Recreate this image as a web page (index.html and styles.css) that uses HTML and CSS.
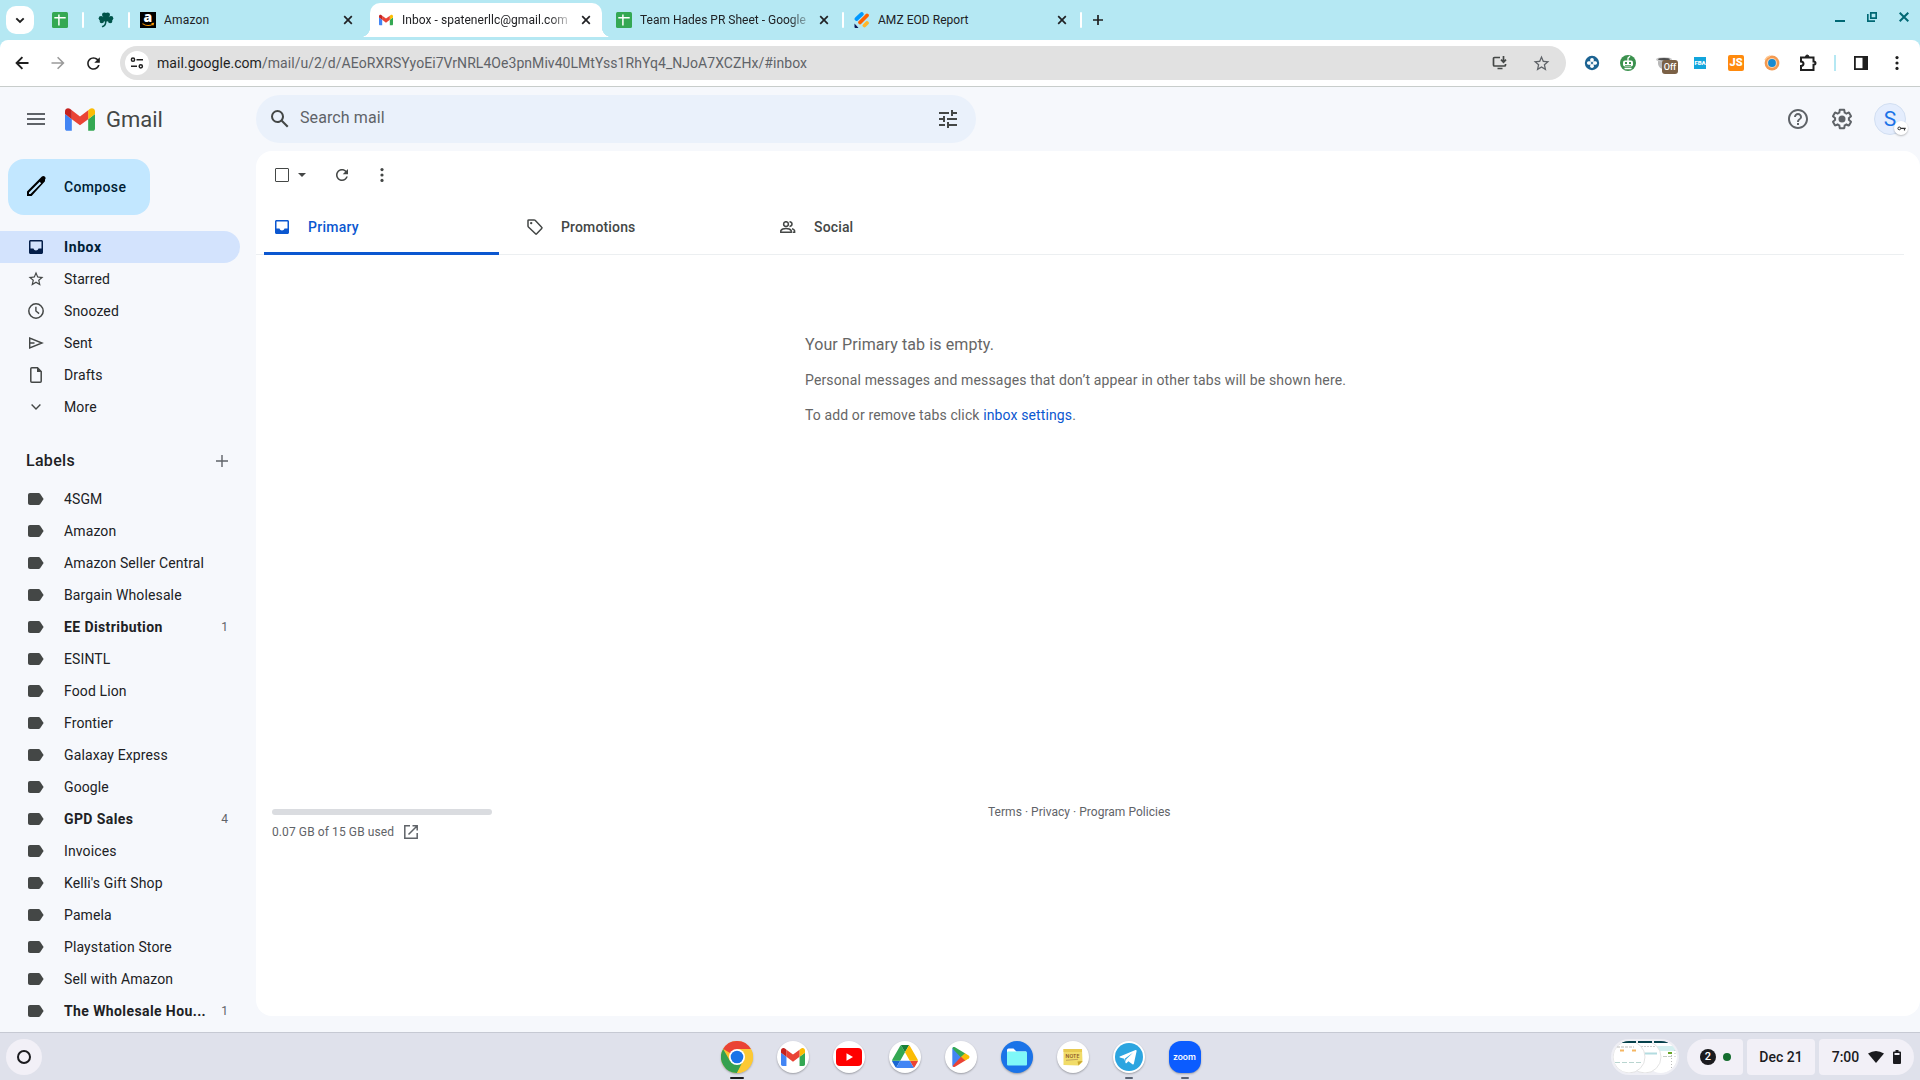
FILE: index.html
```html
<!DOCTYPE html>
<html lang="en">
<head>
    <meta charset="UTF-8">
    <title>Inbox - spatenerllc@gmail.com</title>
    <link rel="stylesheet" href="styles.css">
</head>
<body>
    <svg class="defs" width="0" height="0">
        <symbol id="close" viewBox="0 0 10 10"><path d="M1.2 1.2l7.6 7.6M8.8 1.2L1.2 8.8" stroke="currentColor" stroke-width="1.7" fill="none"/></symbol>
        <symbol id="sheets" viewBox="0 0 16 16"><rect width="16" height="16" rx="1.5" fill="#34a853"/><path d="M6.9 2.5v11M2.3 5.7h11.4" stroke="#fff" stroke-width="1.5"/></symbol>
        <symbol id="gmail" viewBox="52 42 88 66">
            <path fill="#4285f4" d="M58 108h14V74L52 59v43c0 3.32 2.69 6 6 6"/>
            <path fill="#34a853" d="M120 108h14c3.32 0 6-2.69 6-6V59l-20 15"/>
            <path fill="#fbbc04" d="M120 48v26l20-15v-8c0-7.42-8.47-11.65-14.4-7.2"/>
            <path fill="#ea4335" d="M72 74V48l24 18 24-18v26L96 92"/>
            <path fill="#c5221f" d="M52 51v8l20 15V48l-5.600-4.200C60.460 39.350 52 43.580 52 51"/>
        </symbol>
        <symbol id="label" viewBox="0 0 16 12"><path d="M2 0h8.600c.6 0 1.100.3 1.500.8L15.600 6l-3.500 5.200c-.4.500-.9.800-1.500.8H2c-1.100 0-2-.9-2-2V2C0 .9.900 0 2 0z" fill="#444746"/></symbol>
        <symbol id="inbox" viewBox="0 0 14 14"><path fill="currentColor" fill-rule="evenodd" d="M1.500 0h11c.8 0 1.500.7 1.500 1.500v11c0 .8-.7 1.500-1.500 1.500h-11C.7 14 0 13.300 0 12.500v-11C0 .7.700 0 1.500 0zm0 1.500v7h3C4.800 9.700 5.800 10.500 7 10.500s2.200-.8 2.500-2h3v-7z"/></symbol>
        <symbol id="star" viewBox="0 0 24 24"><path fill="currentColor" d="M22 9.240l-7.190-.62L12 2 9.190 8.630 2 9.240l5.460 4.730L5.820 21 12 17.270 18.180 21l-1.630-7.030L22 9.240zM12 15.400l-3.760 2.270 1-4.280-3.320-2.880 4.380-.38L12 6.100l1.710 4.040 4.380.38-3.320 2.880 1 4.280L12 15.400z"/></symbol>
        <symbol id="reload" viewBox="0 0 24 24"><path fill="currentColor" d="M17.650 6.350C16.200 4.900 14.210 4 12 4c-4.420 0-7.990 3.580-7.990 8s3.570 8 7.990 8c3.730 0 6.840-2.550 7.730-6h-2.080c-.82 2.330-3.040 4-5.650 4-3.310 0-6-2.690-6-6s2.690-6 6-6c1.660 0 3.140.69 4.220 1.780L13 11h7V4l-2.350 2.350z"/></symbol>
        <symbol id="dots" viewBox="0 0 4 16"><circle cx="2" cy="2.600" r="1.600" fill="currentColor"/><circle cx="2" cy="8" r="1.600" fill="currentColor"/><circle cx="2" cy="13.400" r="1.600" fill="currentColor"/></symbol>
    </svg>

    <header class="tab-strip">
        <div class="tab-search"><svg width="10" height="7" viewBox="0 0 10 7"><path d="M1.300 1.300L5 5l3.700-3.700" stroke="#1f1f1f" stroke-width="1.900" fill="none"/></svg></div>
        <svg class="pinned" width="16" height="16"><use href="#sheets"/></svg>
        <i class="sep"></i>
        <svg class="pinned" width="16" height="16" viewBox="0 0 16 16"><g fill="#00544a"><circle cx="6.400" cy="2.800" r="2.400"/><circle cx="9.600" cy="2.800" r="2.400"/><circle cx="3" cy="6.300" r="2.300"/><circle cx="3.800" cy="9" r="2.200"/><circle cx="13" cy="6.300" r="2.300"/><circle cx="12.200" cy="9" r="2.200"/><path d="M5.500 4h5l2 5-4 .5c0 3-1 5-4 6l-.8-1.500C6 13.500 7 12 7 9.500L3.500 9z"/></g></svg>
        <i class="sep"></i>
        <div class="tab tab-amazon">
            <svg class="amazon-icon" width="16" height="16" viewBox="0 0 16 16"><rect width="16" height="16"/><text x="8" y="10.400" text-anchor="middle" fill="#fff" font-family="Open Sans, sans-serif" font-weight="800" font-size="14">a</text><path d="M2.500 11.600q5 3.600 10.500.6M11.500 11.500l2-.1-.5 2" stroke="#f90" stroke-width="1.100" fill="none"/></svg>
            <span class="tab-title">Amazon</span><svg class="close" width="10" height="10"><use href="#close"/></svg>
        </div>
        <div class="tab tab-active">
            <svg width="14" height="12"><use href="#gmail"/></svg>
            <span class="tab-title">Inbox - spatenerllc@gmail.com</span><svg class="close" width="10" height="10"><use href="#close"/></svg>
        </div>
        <div class="tab tab-sheet">
            <svg width="16" height="16"><use href="#sheets"/></svg>
            <span class="tab-title">Team Hades PR Sheet - Google</span><svg class="close" width="10" height="10"><use href="#close"/></svg>
        </div>
        <i class="sep"></i>
        <div class="tab tab-report">
            <svg width="16" height="16" viewBox="0 0 16 16"><g stroke-width="3.800" stroke-linecap="round"><path d="M2.500 7L7.800 2" stroke="#0099ff"/><path d="M6 10.500L13 3.500" stroke="#ff6100"/><path d="M10.500 13.500L13 11" stroke="#ffb629"/></g><path d="M.5 11.500L4.500 16H1.500q-1 0-1-1z" fill="#0a1551"/></svg>
            <span class="tab-title">AMZ EOD Report</span><svg class="close" width="10" height="10"><use href="#close"/></svg>
        </div>
        <i class="sep"></i>
        <svg class="new-tab" width="12" height="12" viewBox="0 0 12 12"><path d="M6 1v10M1 6h10" stroke="#1f1f1f" stroke-width="1.700"/></svg>
        <div class="window-buttons">
            <svg width="10" height="10" viewBox="0 0 10 10"><path d="M0 9h10" stroke="#006874" stroke-width="2"/></svg>
            <svg width="10" height="10" viewBox="0 0 10 10"><path d="M3.800.8h5.400v5.400H3.800zM.8 2v7.200H8" stroke="#006874" stroke-width="1.700" fill="none"/></svg>
            <svg width="10" height="10" viewBox="0 0 10 10"><path d="M.7.700l8.600 8.600M9.300.700L.7 9.300" stroke="#006874" stroke-width="2"/></svg>
        </div>
    </header>

    <nav class="browser-bar">
        <svg class="nav-icon" width="14" height="14" viewBox="0 0 14 14"><path d="M13.500 7H2M7.400 1.200L1.600 7l5.800 5.800" stroke="#1f1f1f" stroke-width="1.900" fill="none"/></svg>
        <svg class="nav-icon" width="14" height="14" viewBox="0 0 14 14"><path d="M.5 7H12M6.600 1.200L12.400 7l-5.800 5.800" stroke="#9a9a9a" stroke-width="1.600" fill="none"/></svg>
        <svg class="nav-icon reload" width="19" height="19"><use href="#reload"/></svg>
        <div class="omnibox">
            <div class="site-info"><svg width="14" height="12" viewBox="0 0 14 12"><g fill="none" stroke="#1f1f1f" stroke-width="1.500"><circle cx="3" cy="2.700" r="1.600"/><path d="M6.500 2.700H13M1 9.300h6"/><circle cx="10.800" cy="9.300" r="1.600"/></g></svg></div>
            <span class="url">mail.google.com<span>/mail/u/2/d/AEoRXRSYyoEi7VrNRL4Oe3pnMiv40LMtYss1RhYq4_NJoA7XCZHx/#inbox</span></span>
            <svg class="install" width="16" height="14" viewBox="0 0 16 14"><path d="M8 1.500H2.500q-1 0-1 1v6.500q0 1 1 1h10q1 0 1-1V8M5.500 12.500h5M11.500 0v6M9 3.700l2.500 2.500L14 3.700" fill="none" stroke="#444746" stroke-width="1.700"/></svg>
            <svg class="bookmark" width="19" height="19"><use href="#star"/></svg>
        </div>
        <div class="extensions">
            <svg width="16" height="16" viewBox="0 0 16 16"><circle cx="8" cy="8" r="7.200" fill="#1c6392"/><g fill="#fff"><circle cx="8" cy="4.700" r="1.800"/><circle cx="8" cy="11.300" r="1.800"/><circle cx="4.700" cy="8" r="1.800"/><circle cx="11.300" cy="8" r="1.800"/><path d="M6.500 4.700h3v6.600h-3z"/><path d="M4.700 6.500h6.600v3H4.700z"/></g><path d="M6.800 8h2.400M8 6.800v2.400" stroke="#1c6392" stroke-width="1.200"/></svg>
            <svg width="16" height="16" viewBox="0 0 16 16"><circle cx="8" cy="8" r="8" fill="#3b914e"/><rect x="3" y="5.500" width="10" height="6" rx="2" fill="#fff"/><path d="M8 6V3l2-1.800M4.500 13.500h7" stroke="#fff" stroke-width="1.300" fill="none"/><path d="M5 7h2v2H5zM9 7h2v2H9zM5 10h6v.700H5z" fill="#3b914e"/></svg>
            <div class="ext-off"><svg width="16" height="12" viewBox="0 0 16 12"><path d="M2 2h12v5q-1 5-6 5T2 7z" fill="#b9b9b9"/><ellipse cx="8" cy="2.500" rx="8" ry="2.300" fill="#c9c9c9"/><ellipse cx="8" cy="2.200" rx="6" ry="1.200" fill="#4c4c4c"/></svg><b>Off</b></div>
            <div class="ext-fba">FBA</div>
            <div class="ext-js">JS</div>
            <svg width="16" height="16" viewBox="0 0 16 16"><circle cx="8" cy="8" r="7.400" fill="#f49a50"/><circle cx="8" cy="8" r="5" fill="#fbd2ad"/><circle cx="8" cy="8" r="3.900" fill="#168bd2"/><path d="M1 5a8 8 0 0 1 5-4" stroke="#ffc58c" stroke-width="1.500" fill="none"/></svg>
            <svg class="puzzle" width="18" height="18" viewBox="0 0 18 18"><path d="M2 3.500h12.500v4q2 0 2 1.600t-2 1.700V16H2v-4q2.500-.2 2.500-2.200T2 7.500z" fill="none" stroke="#1f1f1f" stroke-width="2"/><path d="M6.500 3q0-2 1.700-2T10 3" fill="#1f1f1f" stroke="#1f1f1f"/></svg>
            <i></i>
            <svg width="14" height="14" viewBox="0 0 14 14"><rect x=".9" y=".9" width="12.200" height="12.200" fill="none" stroke="#1f1f1f" stroke-width="1.800"/><path d="M8.500 1h5v12h-5z" fill="#1f1f1f"/></svg>
            <svg class="menu" width="4" height="16"><use href="#dots"/></svg>
        </div>
    </nav>

    <div class="gmail">
        <header class="gmail-bar">
            <svg class="hamburger" width="18" height="12" viewBox="0 0 18 12"><path d="M0 1h18M0 6h18M0 11h18" stroke="#5f6368" stroke-width="2"/></svg>
            <svg width="30" height="23"><use href="#gmail"/></svg>
            <span class="brand">Gmail</span>
            <div class="search">
                <svg width="24" height="24" viewBox="0 0 24 24"><path fill="#444746" d="M20.490 19l-5.730-5.730C15.530 12.200 16 10.910 16 9.500A6.500 6.500 0 1 0 9.500 16c1.410 0 2.700-.47 3.770-1.240L19 20.490 20.490 19zM5 9.500C5 7.010 7.010 5 9.500 5S14 7.010 14 9.500 11.990 14 9.500 14 5 11.990 5 9.500z"/></svg>
                <span>Search mail</span>
                <svg width="24" height="24" viewBox="0 0 24 24"><path fill="#444746" d="M3 17v2h6v-2H3zM3 5v2h10V5H3zm10 16v-2h8v-2h-8v-2h-2v6h2zM7 9v2H3v2h4v2h2V9H7zm14 4v-2H11v2h10zm-6-4h2V7h4V5h-4V3h-2v6z"/></svg>
            </div>
            <div class="account">
                <svg width="24" height="24" viewBox="0 0 24 24"><path fill="#5f6368" d="M11 18h2v-2h-2v2zm1-16C6.480 2 2 6.480 2 12s4.480 10 10 10 10-4.480 10-10S17.520 2 12 2zm0 18c-4.410 0-8-3.590-8-8s3.590-8 8-8 8 3.590 8 8-3.590 8-8 8zm0-14c-2.210 0-4 1.790-4 4h2c0-1.100.9-2 2-2s2 .9 2 2c0 2-3 1.750-3 5h2c0-2.250 3-2.500 3-5 0-2.210-1.790-4-4-4z"/></svg>
                <svg width="24" height="24" viewBox="0 0 24 24"><path fill="#5f6368" d="M13.850 22.250h-3.700c-.74 0-1.360-.54-1.450-1.270l-.27-1.890c-.27-.14-.53-.29-.79-.46l-1.800.72c-.7.26-1.470-.03-1.810-.65L2.200 15.530c-.35-.66-.2-1.440.36-1.880l1.530-1.190c-.01-.15-.02-.3-.02-.46 0-.15.010-.31.020-.46l-1.520-1.190c-.59-.45-.74-1.260-.37-1.880l1.850-3.190c.34-.62 1.110-.9 1.790-.63l1.810.73c.26-.17.52-.32.780-.46l.27-1.910c.09-.7.71-1.250 1.440-1.250h3.700c.74 0 1.360.54 1.450 1.270l.27 1.890c.27.14.53.29.79.46l1.800-.72c.71-.26 1.480.03 1.820.65l1.840 3.180c.36.66.2 1.440-.36 1.880l-1.520 1.190c.01.15.020.3.020.46s-.01.31-.02.46l1.520 1.190c.56.45.72 1.230.37 1.860l-1.860 3.220c-.34.62-1.110.9-1.800.63l-1.800-.72c-.26.17-.52.32-.78.46l-.27 1.910c-.1.680-.72 1.220-1.460 1.220zm-3.230-2h2.760l.37-2.550.53-.22c.44-.18.88-.44 1.340-.78l.45-.34 2.380.96 1.380-2.400-2.030-1.580.07-.56c.03-.26.060-.51.060-.78s-.03-.53-.06-.78l-.07-.56 2.030-1.580-1.390-2.400-2.390.96-.45-.35c-.42-.32-.87-.58-1.330-.77l-.52-.22-.37-2.550h-2.760l-.37 2.550-.53.210c-.44.190-.88.440-1.340.790l-.45.330-2.380-.95-1.390 2.390 2.030 1.580-.07.56a7 7 0 0 0 0 1.560l.07.560-2.030 1.580 1.380 2.400 2.390-.96.450.35c.43.330.86.580 1.330.77l.53.220.38 2.550z"/><circle cx="12" cy="12" r="3.500" fill="#5f6368"/></svg>
                <div class="avatar">S<i><svg width="9" height="5" viewBox="0 0 9 5"><circle cx="2.300" cy="2.400" r="1.400" fill="none" stroke="#333"/><path d="M3.700 2.400h5M7.500 2.400v2" stroke="#333" stroke-width="1.200"/></svg></i></div>
            </div>
        </header>

        <div class="content">
            <aside class="sidebar">
                <button class="compose"><svg width="24" height="24" viewBox="0 0 24 24"><path fill="#000" d="M21 4.600c.8-.8.8-2 0-2.800l-.3-.3c-.8-.8-2-.8-2.800 0L3 16.400V21h4.600L21 6.200zM5 19v-1.500L15.700 6.800l1.500 1.500L6.500 19z"/></svg>Compose</button>
                <ul class="folders">
                    <li class="selected"><svg width="14" height="14"><use href="#inbox"/></svg>Inbox</li>
                    <li><svg width="18" height="18"><use href="#star"/></svg>Starred</li>
                    <li><svg width="16" height="16" viewBox="0 0 16 16"><circle cx="8" cy="8" r="7.200" fill="none" stroke="#444746" stroke-width="1.500"/><path d="M7.900 3.800V8l3.200 2.600" fill="none" stroke="#444746" stroke-width="1.400"/></svg>Snoozed</li>
                    <li><svg width="16" height="12" viewBox="0 0 16 12"><path d="M1.700 1.100v9.800L14 6zM1.700 6h4.800" fill="none" stroke="#444746" stroke-width="1.400"/></svg>Sent</li>
                    <li><svg width="12" height="16" viewBox="0 0 12 16"><path d="M7.500.8H1.800q-1 0-1 1v12.400q0 1 1 1h8.400q1 0 1-1V4.500z" fill="none" stroke="#444746" stroke-width="1.500"/><path d="M7 .5V5h4.500z" fill="#444746"/></svg>Drafts</li>
                    <li><svg width="10" height="6" viewBox="0 0 10 6"><path d="M.6.600L5 5 9.400.600" fill="none" stroke="#444746" stroke-width="1.400"/></svg>More</li>
                </ul>
                <div class="labels-title">Labels<svg width="12" height="12" viewBox="0 0 12 12"><path d="M6 0v12M0 6h12" stroke="#5f6368" stroke-width="1.400"/></svg></div>
                <ul class="labels">
                    <li><svg width="16" height="12"><use href="#label"/></svg><span>4SGM</span></li>
                    <li><svg width="16" height="12"><use href="#label"/></svg><span>Amazon</span></li>
                    <li><svg width="16" height="12"><use href="#label"/></svg><span>Amazon Seller Central</span></li>
                    <li><svg width="16" height="12"><use href="#label"/></svg><span>Bargain Wholesale</span></li>
                    <li class="unread"><svg width="16" height="12"><use href="#label"/></svg><span>EE Distribution</span><em>1</em></li>
                    <li><svg width="16" height="12"><use href="#label"/></svg><span>ESINTL</span></li>
                    <li><svg width="16" height="12"><use href="#label"/></svg><span>Food Lion</span></li>
                    <li><svg width="16" height="12"><use href="#label"/></svg><span>Frontier</span></li>
                    <li><svg width="16" height="12"><use href="#label"/></svg><span>Galaxay Express</span></li>
                    <li><svg width="16" height="12"><use href="#label"/></svg><span>Google</span></li>
                    <li class="unread"><svg width="16" height="12"><use href="#label"/></svg><span>GPD Sales</span><em>4</em></li>
                    <li><svg width="16" height="12"><use href="#label"/></svg><span>Invoices</span></li>
                    <li><svg width="16" height="12"><use href="#label"/></svg><span>Kelli's Gift Shop</span></li>
                    <li><svg width="16" height="12"><use href="#label"/></svg><span>Pamela</span></li>
                    <li><svg width="16" height="12"><use href="#label"/></svg><span>Playstation Store</span></li>
                    <li><svg width="16" height="12"><use href="#label"/></svg><span>Sell with Amazon</span></li>
                    <li class="unread"><svg width="16" height="12"><use href="#label"/></svg><span>The Wholesale Hou...</span><em>1</em></li>
                </ul>
            </aside>

            <main class="mail">
                <div class="mail-tools">
                    <i class="checkbox"></i>
                    <svg class="caret" width="8" height="4" viewBox="0 0 8 4"><path d="M0 0h8L4 4z" fill="#444746"/></svg>
                    <svg class="refresh" width="18" height="18"><use href="#reload"/></svg>
                    <svg width="4" height="16"><use href="#dots"/></svg>
                </div>
                <div class="mail-tabs">
                    <div class="active"><svg width="14" height="14"><use href="#inbox"/></svg>Primary</div>
                    <div><svg width="16" height="16" viewBox="0 0 16 16"><path d="M1 1.800q0-.9.900-.9h5.300q.5 0 .9.400l6.600 6.900q.6.600 0 1.200l-5 5.400q-.6.600-1.200 0L1.400 8q-.4-.4-.4-.9z" fill="none" stroke="#444746" stroke-width="1.500"/><circle cx="4.200" cy="4.100" r="1.200" fill="#444746"/></svg>Promotions</div>
                    <div><svg width="16" height="12" viewBox="0 0 16 12"><g fill="none" stroke="#444746" stroke-width="1.500"><circle cx="6" cy="3.100" r="2.400"/><path d="M.8 11.200V9.700Q2.200 7.600 6 7.600t5.200 2.100v1.500z"/><path d="M9.500.8q2.500.2 2.500 2.300T9.500 5.400M12 7.800q2.200.6 2.600 1.900v1.600h-2"/></g></svg>Social</div>
                </div>
                <div class="empty">
                    <h2>Your Primary tab is empty.</h2>
                    <p>Personal messages and messages that don’t appear in other tabs will be shown here.</p>
                    <p class="hint">To add or remove tabs click <a>inbox settings</a>.</p>
                </div>
                <footer>
                    <div class="storage">
                        <div class="storage-bar"></div>
                        <span>0.07 GB of 15 GB used</span><svg width="14" height="14" viewBox="0 0 14 14"><path d="M6 .8H.8v12.400h12.400V8M8.500.8h4.700v4.700M13 1L4.500 9.500" fill="none" stroke="#5f6368" stroke-width="1.500"/></svg>
                    </div>
                    <div class="terms">Terms · Privacy · Program Policies</div>
                </footer>
            </main>
        </div>
    </div>

    <div class="shelf">
        <div class="launcher"><i></i></div>
        <div class="apps">
            <div class="app running"><svg width="32" height="32" viewBox="0 0 32 32"><circle cx="16" cy="16" r="16" fill="#fbc02d"/><path d="M16 16L2.140 8A16 16 0 0 1 29.860 8z" fill="#ea4335"/><path d="M16 16l6.100 3.500L16 32A16 16 0 0 1 2.140 8l6.900 12z" fill="#34a04f"/><path d="M16 8h13.860A16 16 0 0 1 16 32l6.900-12z" fill="#fcc934"/><circle cx="16" cy="16" r="8" fill="#fff"/><circle cx="16" cy="16" r="6.300" fill="#1a73e8"/></svg></div>
            <div class="app white"><svg width="24" height="18"><use href="#gmail"/></svg></div>
            <div class="app white"><svg width="26" height="18" viewBox="0 0 26 18"><rect width="26" height="18" rx="4" fill="#f00"/><path d="M10.500 5.200v7.600L17 9z" fill="#fff"/></svg></div>
            <div class="app white"><svg width="26" height="23" viewBox="0 0 87.300 78"><path d="M6.600 66.850l3.850 6.650c.8 1.400 1.950 2.500 3.300 3.300l13.750-23.800H0c0 1.550.4 3.100 1.200 4.500z" fill="#1967d2"/><path d="M43.650 25L29.900 1.200c-1.350.8-2.500 1.900-3.300 3.300L1.200 48.500A9 9 0 0 0 0 53h27.500z" fill="#34a853"/><path d="M73.550 76.800c1.350-.8 2.500-1.900 3.300-3.300l9.250-16A9 9 0 0 0 87.300 53H59.800z" fill="#ea4335"/><path d="M43.650 25L57.400 1.200C56.050.4 54.500 0 52.900 0H34.400c-1.600 0-3.150.45-4.500 1.200z" fill="#188038"/><path d="M59.800 53H27.500L13.750 76.800c1.350.8 2.900 1.200 4.500 1.200h50.800c1.600 0 3.150-.45 4.500-1.200z" fill="#4285f4"/><path d="M73.400 26.500L60.700 4.500c-.8-1.400-1.950-2.500-3.300-3.300L43.650 25 59.800 53h27.450a9 9 0 0 0-1.200-4.500z" fill="#fbbc04"/></svg></div>
            <div class="app white"><svg width="18" height="20" viewBox="0 0 18 20"><path d="M1.500 0L9.500 10l-8 10Q.3 19.700.3 18V2Q.3.300 1.500 0z" fill="#4285f4"/><path d="M1.500 0q.7-.2 1.500.3L13.300 6.500 9 10.500.5 1.500Q.8.300 1.500 0z" fill="#34a853"/><path d="M13 6.300l3.700 2.300q1.600 1.400 0 2.800L13 13.700 8.900 10z" fill="#fbbc04"/><path d="M9 9.800l4.300 3.800L3 19.700q-1.500.8-2.500-.8z" fill="#ea4335"/></svg></div>
            <div class="app files"><svg width="22" height="18" viewBox="0 0 22 18"><path d="M1 2Q1 .5 2.500.5h5l3 3H20V12H1z" fill="#fff"/><rect x="1" y="3.500" width="20" height="14" rx="1" fill="#7ff8f8"/></svg></div>
            <div class="app white"><svg width="20" height="18" viewBox="0 0 20 18"><path d="M.5 1h18.500l.5 13-4 3.500L.5 17z" fill="#f1dc69"/><path d="M.5 1H19v3H.5z" fill="#e8ca50"/><path d="M19.500 13l-5 .5 1 4z" fill="#c9a52f"/><text x="9.500" y="10" text-anchor="middle" font-family="Inter, sans-serif" font-size="5" font-weight="600" fill="#8b5728">NOTE</text><path d="M3 12.300l12-1" stroke="#a85" stroke-width=".7"/></svg></div>
            <div class="app white idle"><svg width="28" height="28" viewBox="0 0 28 28"><circle cx="14" cy="14" r="14" fill="#2ca5e0"/><path d="M4.800 13.400L20.500 7q1.300-.3 1.100 1.200l-2.700 12.400q-.3 1.300-1.500.6l-4-3-2 2q-.6.500-.9-.5l-1.200-4-4.400-1.300q-1-.4-.1-1zM10 15.500l.8 3.600.4-2.800 6.700-6.500z" fill="#fff"/></svg></div>
            <div class="app zoom idle">zoom</div>
        </div>
        <div class="tray">
            <svg class="previews" width="68" height="36" viewBox="0 0 68 36">
                <clipPath id="pill"><rect x="2" y="2" width="64" height="32" rx="16"/></clipPath>
                <rect width="68" height="36" rx="18" fill="#efeff5"/>
                <g clip-path="url(#pill)">
                    <circle cx="50" cy="18" r="16" fill="#fff"/><path d="M43 2h14v2H43z" fill="#06414b"/><path d="M46 7h18v5H46z" fill="#d5f0f0"/><path d="M57 13h4v2h-4z" fill="#69a527"/><path d="M52 17.500h10" stroke="#c3ccc3" stroke-dasharray="4 1"/><path d="M60.500 16v16M64 8v10" stroke="#bbb" stroke-dasharray="1 2"/>
                    <circle cx="34" cy="18" r="16" fill="#fff" stroke="#e3e3e3"/><path d="M27 2h14v2H27z" fill="#06414b"/><path d="M30 7.500h14" stroke="#ccc" stroke-dasharray="2 1"/><path d="M33 14.500h13" stroke="#b3dce0" stroke-width="2"/>
                    <circle cx="18" cy="18" r="16" fill="#fff" stroke="#e3e3e3"/><path d="M11 2h14v2H11z" fill="#06414b"/><path d="M6 8h17" stroke="#bbb" stroke-dasharray="3 1"/><path d="M9 11.500h4M21 11.500h4" stroke="#f5b662" stroke-width="2"/><path d="M4 23.500h27" stroke="#b9d5d0" stroke-dasharray="5 2"/>
                </g>
            </svg>
            <div class="pill notices"><b>2</b><i></i></div>
            <div class="pill date">Dec 21</div>
            <div class="pill clock">7:00<svg width="16" height="12" viewBox="0 0 16 12"><path d="M0 2.600Q8-2.600 16 2.600L8 12z" fill="#1b1b1f"/></svg><svg width="8" height="14" viewBox="0 0 8 14"><path d="M2.500 0h3v1.500H7q1 0 1 1V13q0 1-1 1H1q-1 0-1-1V2.500q0-1 1-1h1.500z" fill="#1b1b1f"/><path d="M1.500 3h5v2h-5z" fill="#f2f0f7"/></svg></div>
        </div>
    </div>
</body>
</html>
```

FILE: styles.css
```css
* {
    box-sizing: border-box;
}
body {
    margin: 0;
    width: 1920px;
    height: 1080px;
    overflow: hidden;
    display: flex;
    flex-direction: column;
    font-family: Roboto, "Liberation Sans", sans-serif;
    font-size: 14px;
    color: #202124;
    background: #b5e8f3;
}
svg {
    flex: none;
    display: block;
}
.defs {
    position: absolute;
}
ul {
    list-style: none;
    margin: 0;
    padding: 0;
}

/* tab strip */
.tab-strip {
    height: 40px;
    flex: none;
    display: flex;
    align-items: center;
    padding: 0 11px 8px 6px;
    background: #b5e8f3;
}
.tab-strip > * {
    margin-top: 8px;
}
.tab-search {
    width: 28px;
    height: 28px;
    border-radius: 10px;
    background: #fff;
    display: flex;
    align-items: center;
    justify-content: center;
    margin-right: 18px;
}
.sep {
    width: 2px;
    height: 16px;
    background: #fff;
    border-radius: 1px;
}
.pinned {
    margin-right: 14px;
}
.sep + .pinned {
    margin-left: 14px;
}
.amazon-icon {
    overflow: visible;
}
.tab {
    display: flex;
    align-items: center;
    height: 34px;
    font-size: 12px;
    letter-spacing: 0.04px;
}
.tab-title {
    flex: 1;
    margin-left: 8px;
    margin-right: 13px;
    white-space: nowrap;
    overflow: hidden;
}
.tab-amazon {
    width: 240px;
    padding: 0 17px 0 10px;
    letter-spacing: 0.2px;
}
.tab-active {
    width: 232px;
    background: #fff;
    border-radius: 10px 10px 0 0;
    padding: 0 11px 0 9px;
    position: relative;
}
.tab-active .tab-title {
    margin-left: 9px;
    margin-right: 12px;
}
/* flared feet of the active tab */
.tab-active::before,
.tab-active::after {
    content: "";
    position: absolute;
    bottom: 0;
    width: 10px;
    height: 10px;
}
.tab-active::before {
    left: -10px;
    background: radial-gradient(circle at 0 0, #b5e8f3 10px, #fff 10.5px);
}
.tab-active::after {
    right: -10px;
    background: radial-gradient(circle at 100% 0, #b5e8f3 10px, #fff 10.5px);
}
.tab-active .tab-title,
.tab-sheet .tab-title {
    -webkit-mask-image: linear-gradient(to right, #000 88%, rgba(0,0,0,0.2));
    mask-image: linear-gradient(to right, #000 88%, rgba(0,0,0,0.2));
}
.tab-sheet {
    width: 240px;
    padding: 0 13px 0 14px;
    letter-spacing: 0;
}
.tab-sheet .tab-title {
    margin-right: 10px;
}
.tab-report {
    width: 236px;
    padding: 0 13px 0 10px;
}
.new-tab {
    margin-left: 10px;
}
.window-buttons {
    margin-left: auto;
    display: flex;
    gap: 22px;
    margin-top: 2px;
}

/* address bar */
.browser-bar {
    height: 47px;
    flex: none;
    display: flex;
    align-items: center;
    background: #fff;
    border-radius: 8px 8px 0 0;
    border-bottom: 1px solid #c8cdcb;
    padding-left: 15px;
}
.nav-icon {
    margin-right: 22px;
}
.reload {
    margin: 0 17px 0 -3px;
    color: #1f1f1f;
}
.omnibox {
    width: 1446px;
    height: 34px;
    border-radius: 17px;
    background: #e1e1e1;
    display: flex;
    align-items: center;
    padding: 0 15px 0 5px;
}
.site-info {
    width: 24px;
    height: 24px;
    border-radius: 50%;
    background: #fff;
    display: flex;
    align-items: center;
    justify-content: center;
}
.url {
    margin-left: 8px;
    flex: 1;
    letter-spacing: 0.05px;
    color: #1f1f1f;
}
.url span {
    color: #5f6368;
}
.bookmark {
    margin-left: 24px;
    color: #5f6368;
}
.extensions {
    display: flex;
    align-items: center;
    margin-left: 18px;
    gap: 20px;
}
.extensions > i {
    width: 2px;
    height: 16px;
    background: #b5e8f3;
    margin: 0 -2px 0 -3px;
}
.puzzle {
    margin-left: -1px;
}
.ext-off {
    width: 16px;
    height: 12px;
    position: relative;
}
.ext-off b {
    position: absolute;
    left: 6px;
    top: 3px;
    width: 16px;
    height: 14px;
    border-radius: 3px;
    background: #7b6146;
    color: #fff;
    font-size: 9px;
    font-weight: 500;
    line-height: 14px;
    text-align: center;
}
.ext-fba {
    width: 12px;
    height: 12px;
    margin: 0 2px;
    background: #12a5dc;
    color: #fff;
    font-size: 6px;
    font-weight: 900;
    line-height: 11px;
    text-align: center;
}
.ext-js {
    width: 16px;
    height: 16px;
    border-radius: 2px;
    background: #ff8a0d;
    color: #fff;
    font-size: 11px;
    font-weight: 900;
    line-height: 16px;
    text-align: center;
}
.menu {
    margin-left: 7px;
    color: #1f1f1f;
}

/* gmail header */
.gmail {
    flex: 1;
    min-height: 0;
    background: #f6f8fc;
    display: flex;
    flex-direction: column;
}
.gmail-bar {
    height: 64px;
    flex: none;
    display: flex;
    align-items: center;
    padding: 0 14px 0 27px;
}
.hamburger {
    margin-right: 20px;
}
.brand {
    width: 150px;
    margin-left: 11px;
    font-size: 22px;
    color: #444746;
}
.search {
    width: 720px;
    height: 48px;
    border-radius: 24px;
    background: #eaf1fb;
    display: flex;
    align-items: center;
    padding: 0 16px 0 12px;
}
.search span {
    flex: 1;
    margin-left: 8px;
    font-size: 16px;
    color: #5f6368;
    padding-bottom: 3px;
    letter-spacing: 0.1px;
}
.account {
    margin-left: auto;
    display: flex;
    align-items: center;
    gap: 20px;
}
.avatar {
    width: 32px;
    height: 32px;
    border: 1px solid #d2dff2;
    border-radius: 50%;
    background: #e4edfd;
    color: #1a73e8;
    font-size: 21px;
    line-height: 31px;
    text-align: center;
    position: relative;
}
.avatar i {
    position: absolute;
    right: -3px;
    bottom: -1px;
    width: 14px;
    height: 14px;
    border-radius: 50%;
    background: #fff;
    box-shadow: 0 1px 2px rgba(0,0,0,0.25);
    display: flex;
    align-items: center;
    justify-content: center;
}

.content {
    flex: 1;
    min-height: 0;
    display: flex;
}

/* sidebar */
.sidebar {
    width: 256px;
    padding-top: 8px;
    overflow: hidden;
}
.compose {
    width: 142px;
    height: 56px;
    margin: 0 0 16px 8px;
    padding: 0 0 0 16px;
    border: none;
    border-radius: 16px;
    background: #c2e7ff;
    color: #001d35;
    font-family: inherit;
    font-size: 14px;
    font-weight: 500;
    letter-spacing: 0.35px;
    display: flex;
    align-items: center;
    gap: 16px;
}
.sidebar li {
    display: flex;
    align-items: center;
    width: 240px;
    height: 32px;
    padding-right: 12px;
    letter-spacing: 0.12px;
}
.folders li {
    display: grid;
    grid-template-columns: 20px 1fr;
    column-gap: 18px;
    padding-left: 26px;
    color: #202124;
}
.folders svg {
    justify-self: center;
    color: #444746;
}
.folders .selected {
    background: #d3e3fd;
    border-radius: 0 16px 16px 0;
    font-weight: 700;
    letter-spacing: 0.6px;
    color: #001d35;
}
.folders .selected svg {
    color: #041e49;
}
.labels-title {
    display: flex;
    align-items: center;
    justify-content: space-between;
    height: 60px;
    padding: 15px 28px 0 26px;
    font-size: 16px;
    font-weight: 500;
    letter-spacing: 0.3px;
}
.labels li {
    padding-left: 28px;
}
.labels span {
    flex: 1;
    margin-left: 20px;
    white-space: nowrap;
}
.labels em {
    font-style: normal;
    font-weight: 400;
    font-size: 12px;
    letter-spacing: 0;
    color: #5f6368;
}
.labels .unread {
    font-weight: 700;
    letter-spacing: 0.4px;
}

/* mail list */
.mail {
    flex: 1;
    height: 865px;
    background: #fff;
    border-radius: 16px;
    display: flex;
    flex-direction: column;
}
.mail-tools {
    height: 48px;
    display: flex;
    align-items: center;
    padding-left: 19px;
    color: #444746;
}
.checkbox {
    width: 14px;
    height: 14px;
    outline: 1.5px solid #444746;
    outline-offset: -1px;
    border-radius: 1px;
}
.caret {
    margin: 0 27px 0 9px;
}
.refresh {
    margin-right: 29px;
}
.mail-tabs {
    height: 56px;
    display: flex;
    border-bottom: 1px solid #eceff1;
    margin-right: 16px;
}
.mail-tabs > div {
    width: 253px;
    height: 56px;
    display: flex;
    align-items: center;
    gap: 18px;
    padding-left: 15px;
    font-weight: 500;
    letter-spacing: 0.15px;
    color: #444746;
}
.mail-tabs .active {
    width: 235px;
    margin: 0 13px 0 8px;
    padding-left: 11px;
    gap: 19px;
    letter-spacing: 0.25px;
    border-bottom: 3px solid #0b57d0;
    padding-top: 3px;
    color: #0b57d0;
}
.empty {
    margin: 78px 0 0 549px;
    color: #666;
}
.empty h2 {
    margin: 0;
    font-size: 16px;
    font-weight: 400;
    line-height: 24px;
    letter-spacing: 0.1px;
}
.empty p {
    margin: 13px 0 0;
    line-height: 20px;
    letter-spacing: 0.15px;
}
.empty p.hint {
    margin-top: 15px;
    letter-spacing: 0.12px;
}
.empty a {
    color: #0b57d0;
}
footer {
    display: grid;
    grid-template-columns: 220px 1fr;
    margin: 384px 0 0 16px;
    font-size: 12px;
    color: #5f6368;
}
.storage {
    display: flex;
    flex-wrap: wrap;
    align-items: center;
}
.storage-bar {
    width: 220px;
    height: 6px;
    border-radius: 3px;
    background: #dadce0;
    margin-bottom: 10px;
}
.storage span {
    margin-right: 10px;
    letter-spacing: 0.1px;
}
.terms {
    margin-left: 496px;
    line-height: 14px;
    margin-top: -4px;
    letter-spacing: 0.03px;
}

/* shelf */
.shelf {
    height: 48px;
    flex: none;
    display: grid;
    grid-template-columns: 1fr auto 1fr;
    align-items: center;
    background: #dfe1eb;
    border-top: 1px solid #c6c9d3;
    padding: 0 6px;
}
.launcher {
    width: 36px;
    height: 36px;
    border-radius: 50%;
    background: #f2f0f7;
    display: flex;
    align-items: center;
    justify-content: center;
}
.launcher i {
    width: 14px;
    height: 14px;
    border: 2px solid #1b1b1f;
    border-radius: 50%;
}
.apps {
    display: flex;
    gap: 24px;
    padding-left: 1px;
}
.app {
    width: 32px;
    height: 32px;
    border-radius: 50%;
    display: flex;
    align-items: center;
    justify-content: center;
    box-shadow: 0 1px 2px rgba(0,0,0,0.3);
    position: relative;
}
.white {
    background: #fff;
}
.files {
    background: #1a73e8;
}
.zoom {
    background: #0b5cff;
    border-radius: 12px;
    color: #fff;
    font-size: 9px;
    font-weight: 500;
}
.running::after,
.idle::after {
    content: "";
    position: absolute;
    bottom: -6px;
    left: 9px;
    width: 14px;
    height: 2px;
    border-radius: 1px;
    background: #1b1b1f;
}
.idle::after {
    left: 12px;
    width: 8px;
    background: #5c6474;
}
.tray {
    justify-self: end;
    display: flex;
    gap: 4px;
    font-weight: 500;
    color: #1b1b1f;
}
.previews {
    margin-right: 4px;
}
.pill {
    height: 36px;
    background: #f2f0f7;
    border-radius: 4px;
    display: flex;
    align-items: center;
    justify-content: center;
}
.notices {
    width: 56px;
    border-radius: 18px 4px 4px 18px;
    gap: 7px;
    padding-left: 1px;
}
.notices b {
    width: 16px;
    height: 16px;
    border-radius: 50%;
    background: #1b1b1f;
    color: #fff;
    font-size: 11px;
    font-weight: 500;
    line-height: 16px;
    text-align: center;
}
.notices i {
    width: 8px;
    height: 8px;
    border-radius: 50%;
    background: #146c2e;
}
.date {
    width: 68px;
}
.clock {
    width: 95px;
    border-radius: 4px 18px 18px 4px;
    gap: 9px;
}
```
